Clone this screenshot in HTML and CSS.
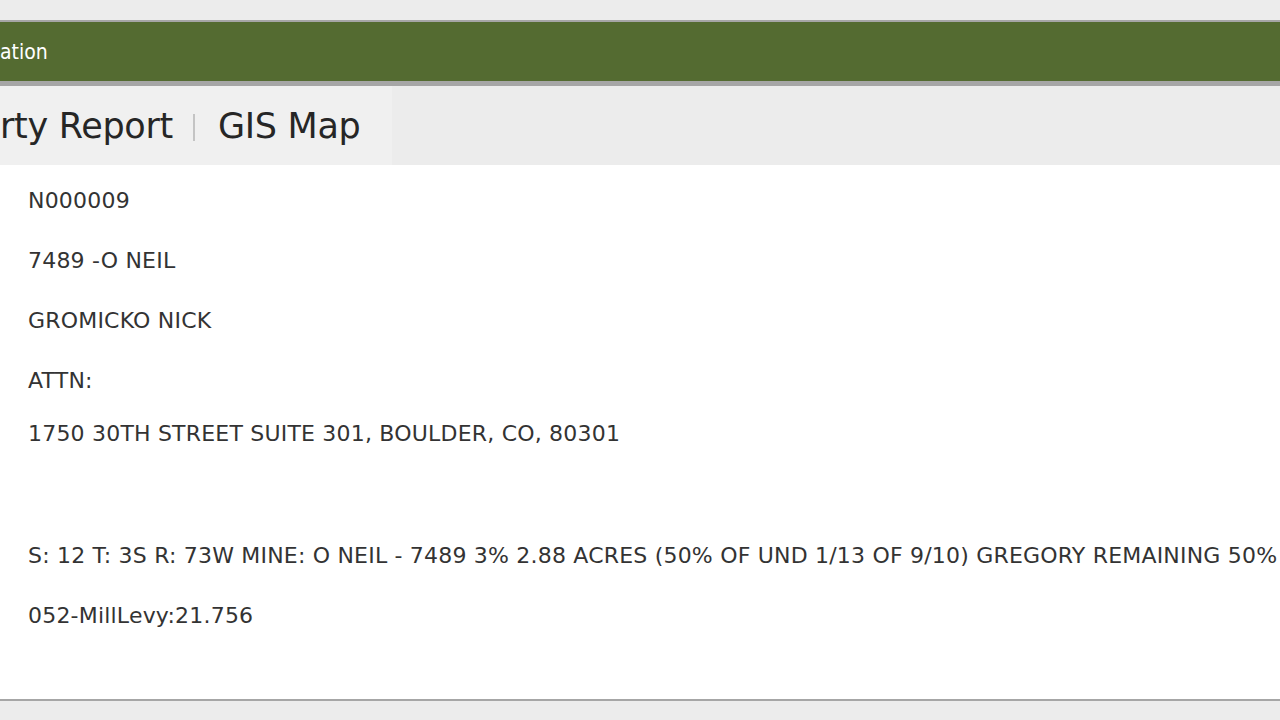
FILE: index.html
```html
<!DOCTYPE html>
<html lang="en">
  <head>
    <meta charset="UTF-8" />
    <meta name="viewport" content="width=device-width, initial-scale=1.0" />
    <title>Property Report</title>
    <link rel="stylesheet" href="styles.css">
  </head>
  <body>
    <div class="top-gap"></div>
    <div class="title-bar">
      <span class="title-text">ation</span>
    </div>
    <div class="tab-row">
      <div class="tabs">
        <span class="tab">rty Report</span>
        <span class="tab-sep"></span>
        <span class="tab">GIS Map</span>
      </div>
    </div>
    <div class="content">
      <p class="line">N000009</p>
      <p class="line">7489 -O NEIL</p>
      <p class="line">GROMICKO NICK</p>
      <p class="line">ATTN:</p>
      <p class="line address">1750 30TH STREET SUITE 301, BOULDER, CO, 80301</p>
      <p class="line legal">S: 12 T: 3S R: 73W MINE: O NEIL - 7489 3% 2.88 ACRES (50% OF UND 1/13 OF 9/10) GREGORY REMAINING 50% OF UND 1/13 OF 9/10</p>
      <p class="line">052-MillLevy:21.756</p>
    </div>
    <div class="bottom"></div>
  </body>
</html>
```

FILE: styles.css
```css
html, body {
  margin: 0;
  padding: 0;
  background-color: #ececec;
  overflow: hidden;
}

body {
  font-family: "DejaVu Sans", sans-serif;
  color: #333333;
  width: 1280px;
  height: 720px;
}

.top-gap {
  height: 20px;
}

.title-bar {
  height: 59px;
  background-color: #546b31;
  border-top: 2px solid #a6a6a6;
  border-bottom: 5px solid #a6a6a6;
  display: flex;
  align-items: center;
  overflow: hidden;
}

.title-text {
  color: #ffffff;
  font-family: "DejaVu Sans Condensed", "DejaVu Sans", sans-serif;
  font-size: 21px;
}

.tab-row {
  height: 79px;
  display: flex;
}

.tabs {
  width: 392px;
  background-color: #f0f0f0;
  display: flex;
  align-items: center;
  overflow: hidden;
}

.tab {
  font-size: 35px;
  letter-spacing: -0.3px;
  color: #262626;
  white-space: nowrap;
}

.tab-sep {
  flex: none;
  width: 2px;
  height: 27px;
  background-color: #c4c4c4;
  margin: 4px 23px 0 20px;
}

.content {
  background-color: #ffffff;
  height: 536px;
  border-bottom: 2px solid #a6a6a6;
  padding: 22px 0 0 28px;
  box-sizing: border-box;
  overflow: hidden;
}

.line {
  margin: 0 0 32px 0;
  font-size: 22px;
  line-height: 28px;
  letter-spacing: 0.2px;
  white-space: nowrap;
}

.address {
  margin-top: -7px;
  margin-bottom: 94px;
}
```
